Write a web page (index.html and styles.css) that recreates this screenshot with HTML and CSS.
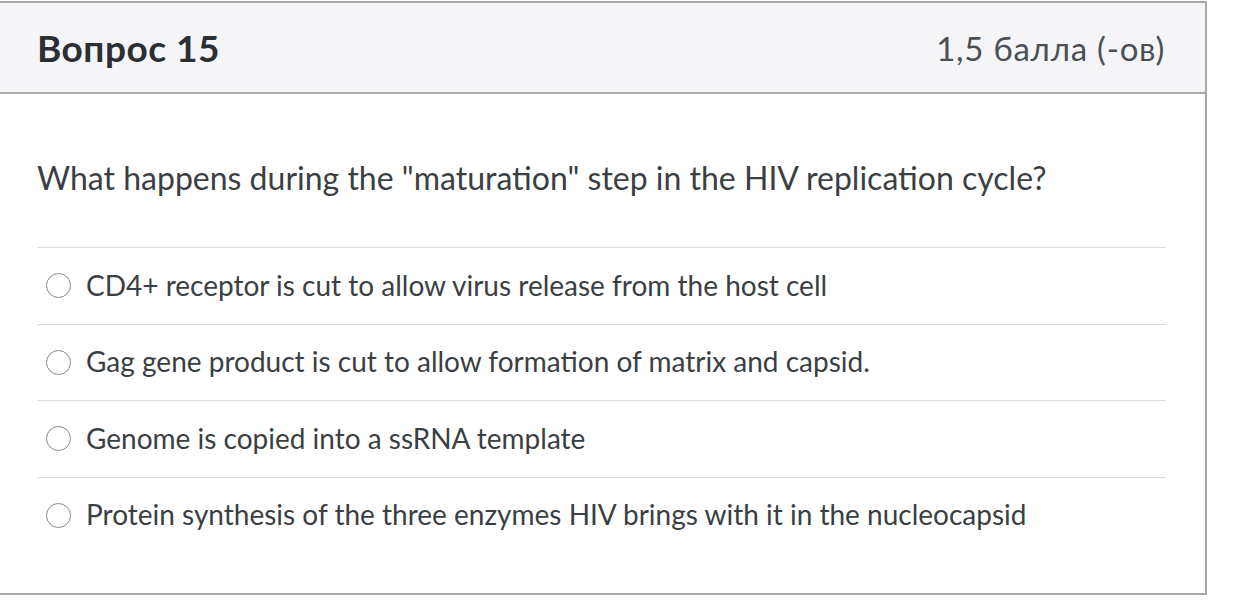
FILE: index.html
```html
<!DOCTYPE html>
<html lang="ru">
<head>
<meta charset="utf-8">
<title>Вопрос 15</title>
<link rel="stylesheet" href="styles.css">
</head>
<body>
<div class="question">
  <div class="q-header">
    <span class="q-title">Вопрос 15</span>
    <span class="q-points">1,5 балла (-ов)</span>
  </div>
  <div class="q-body">
    <p class="q-text">What happens during the "maturation" step in the HIV replication cycle?</p>
    <ul class="answers">
      <li class="answer"><span class="radio"></span><span class="label">CD4+ receptor is cut to allow virus release from the host cell</span></li>
      <li class="answer"><span class="radio"></span><span class="label">Gag gene product is cut to allow formation of matrix and capsid.</span></li>
      <li class="answer"><span class="radio"></span><span class="label">Genome is copied into a ssRNA template</span></li>
      <li class="answer"><span class="radio"></span><span class="label">Protein synthesis of the three enzymes HIV brings with it in the nucleocapsid</span></li>
    </ul>
  </div>
</div>
</body>
</html>
```
FILE: styles.css
```css
* { box-sizing: border-box; }
html, body { margin: 0; padding: 0; background: #fff; }
body {
  font-family: Lato, "Open Sans", sans-serif;
  color: #2d3b45;
  overflow: hidden;
}
.question {
  width: 1209px;
  margin: 1px 0 0 -2px;
  border: 2px solid #a9a9ab;
  height: 594px;
}
.q-header {
  height: 91px;
  background: #f5f5f7;
  border-bottom: 2px solid #a9a9ab;
  display: flex;
  align-items: center;
  justify-content: space-between;
  padding: 0 40px 0 37px;
}
.q-title {
  font-weight: 700;
  font-size: 37px;
  letter-spacing: 0.5px;
  color: #2b2f33;
}
.q-points {
  font-size: 33px;
  letter-spacing: 0.75px;
  color: #4a4f54;
}
.q-body {
  padding: 0 39px 0 37px;
}
.q-text {
  margin: 0;
  padding-top: 64px;
  height: 153px;
  font-size: 32px;
  line-height: 40px;
  color: #3a3f44;
}
.answers {
  list-style: none;
  margin: 0;
  padding: 0;
}
.answer {
  border-top: 1px solid #dcdcdc;
  height: 76.5px;
  display: flex;
  align-items: center;
  gap: 15px;
  padding-left: 9px;
}
.radio {
  width: 25px;
  height: 25px;
  border: 1.5px solid #8a8a8a;
  border-radius: 50%;
  flex: none;
}
.label {
  font-size: 28px;
  color: #3a3f44;
  position: relative;
  top: -1px;
}
```
